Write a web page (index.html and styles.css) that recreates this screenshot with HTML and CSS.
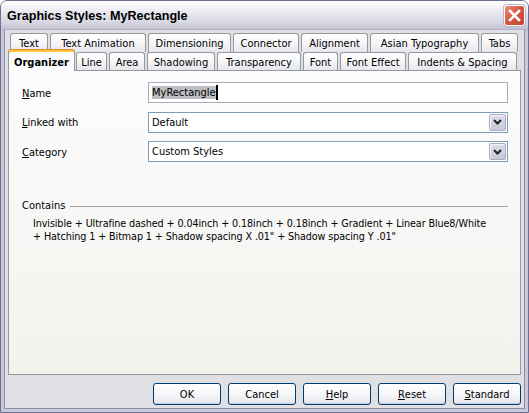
FILE: index.html
```html
<!DOCTYPE html>
<html>
<head>
<meta charset="utf-8">
<link rel="stylesheet" href="styles.css">
</head>
<body>
<div class="window">
  <div class="titlebar">
    <span class="title">Graphics Styles: MyRectangle</span>
    <div class="close">
      <svg width="13" height="13" viewBox="0 0 13 13"><path d="M2 2 L11 11 M11 2 L2 11" stroke="#fff" stroke-width="2.6" stroke-linecap="square"/></svg>
    </div>
  </div>
  <div class="frame">
    <div class="tabs">
      <div class="tabrow back">
        <div class="tab">Text</div>
        <div class="tab">Text Animation</div>
        <div class="tab">Dimensioning</div>
        <div class="tab">Connector</div>
        <div class="tab">Alignment</div>
        <div class="tab">Asian Typography</div>
        <div class="tab last">Tabs</div>
      </div>
      <div class="tabrow front">
        <div class="tab sel">Organizer</div>
        <div class="tab">Line</div>
        <div class="tab">Area</div>
        <div class="tab">Shadowing</div>
        <div class="tab">Transparency</div>
        <div class="tab">Font</div>
        <div class="tab">Font Effect</div>
        <div class="tab">Indents &amp; Spacing</div>
      </div>
    </div>
    <div class="panel">
      <div class="form">
        <label class="lbl"><u>N</u>ame</label>
        <div class="input"><span class="selected">MyRectangle</span><span class="caret"></span></div>
        <label class="lbl"><u>L</u>inked with</label>
        <div class="select"><span>Default</span><span class="dd"><svg width="9" height="6" viewBox="0 0 9 6"><path d="M1 1 L4.5 4.5 L8 1" fill="none" stroke="#222" stroke-width="2"/></svg></span></div>
        <label class="lbl"><u>C</u>ategory</label>
        <div class="select"><span>Custom Styles</span><span class="dd"><svg width="9" height="6" viewBox="0 0 9 6"><path d="M1 1 L4.5 4.5 L8 1" fill="none" stroke="#222" stroke-width="2"/></svg></span></div>
      </div>
      <div class="group">
        <div class="group-head"><span>Contains</span><span class="rule"></span></div>
        <div class="group-body">Invisible + Ultrafine dashed + 0.04inch + 0.18inch + 0.18inch + Gradient + Linear Blue8/White<br>+ Hatching 1 + Bitmap 1 + Shadow spacing X .01" + Shadow spacing Y .01"</div>
      </div>
    </div>
    <div class="buttons">
      <div class="btn">OK</div>
      <div class="btn">Cancel</div>
      <div class="btn"><u>H</u>elp</div>
      <div class="btn"><u>R</u>eset</div>
      <div class="btn"><u>S</u>tandard</div>
    </div>
  </div>
</div>
</body>
</html>
```

FILE: styles.css
```css
* { box-sizing: border-box; }
html, body { margin: 0; padding: 0; background: #ffffff; }
body {
  font-family: "DejaVu Sans Condensed", "Liberation Sans", sans-serif;
  font-size: 11px;
  color: #000;
}
.window {
  width: 529px;
  height: 413px;
  border: 1px solid #6f6e92;
  border-radius: 7px 7px 0 0;
  background: #e0dfe3;
  display: flex;
  flex-direction: column;
  overflow: hidden;
}
.titlebar {
  height: 29px;
  flex: none;
  display: flex;
  align-items: center;
  justify-content: space-between;
  padding: 0 3px 0 6px;
  background: linear-gradient(#ffffff 0%, #ecebf2 35%, #d8d7e3 75%, #c3c2d3 100%);
  border-bottom: 1px solid #b2b1c6;
}
.title {
  font-family: "Liberation Sans", "DejaVu Sans", sans-serif;
  font-weight: bold;
  font-size: 12.6px;
  color: #000;
  padding-top: 2px;
}
.close {
  width: 21px;
  height: 21px;
  border: 1px solid #ffffff;
  border-radius: 3px;
  background: linear-gradient(135deg, #ec8e76 0%, #d65a43 45%, #c23e2a 100%);
  box-shadow: 0 0 0 1px #b7b6c8;
  display: flex;
  align-items: center;
  justify-content: center;
}
.frame {
  flex: 1;
  border: 3px solid #c9c8d7;
  border-top: 0;
  box-shadow: inset 1px 0 #8d8ca8, inset -1px 0 #8d8ca8, inset 0 -1px #8d8ca8;
  padding: 3px 4px 0 4px;
  display: flex;
  flex-direction: column;
}
.tabrow {
  display: grid;
  position: relative;
}
.tabrow.back {
  height: 19px;
  margin-left: 2px;
  grid-template-columns: 40px 98px 85px 68px 69px 111px 37px;
}
.tabrow.front {
  height: 18px;
  grid-template-columns: 68px 33px 38px 70px 86px 37px 68px 111px;
  z-index: 1;
}
.tab {
  margin-right: 2px;
  border: 1px solid #919b9c;
  border-bottom: 0;
  border-radius: 3px 3px 0 0;
  background: linear-gradient(#fefefe 0%, #f6f6f8 50%, #e6e6ec 100%);
  display: flex;
  align-items: center;
  justify-content: center;
  white-space: nowrap;
  padding-top: 1px;
}
.tab.last { margin-right: 0; }
.tab.sel {
  margin-right: 1px;
  margin-top: -3px;
  margin-bottom: -1px;
  font-weight: bold;
  background: #fcfcfe;
  border-top: 1px solid #e68b2c;
  box-shadow: inset 0 2px #ffc83c;
  padding-top: 3px;
  position: relative;
  z-index: 2;
}
.panel {
  height: 305px;
  flex: none;
  border: 1px solid #919b9c;
  background: linear-gradient(#fcfcfe 0%, #f8f8f7 40%, #f3f2ed 100%);
  padding: 11px 12px 0 13px;
}
.form {
  display: grid;
  grid-template-columns: 126px 1fr;
  row-gap: 8.5px;
  align-items: center;
}
.lbl { padding-top: 1px; }
.input, .select {
  height: 21px;
  background: #fff;
  display: flex;
  align-items: center;
  padding-left: 3px;
}
.input { border: 1px solid #a5acb5; }
.selected {
  background: #bdbdc2;
  color: #000;
}
.caret {
  width: 2px;
  height: 15px;
  background: #000;
}
.select {
  border: 1px solid #7f9db9;
  justify-content: space-between;
  padding-right: 1px;
}
.dd {
  width: 17px;
  height: 17px;
  border: 1px solid #a9abc1;
  border-radius: 2px;
  background: linear-gradient(#dcdde8 0%, #c7c9da 100%);
  box-shadow: inset 1px 1px #f2f2f7;
  display: flex;
  align-items: center;
  justify-content: center;
}
.group { margin-top: 37px; }
.group-head {
  display: flex;
  align-items: center;
  gap: 5px;
}
.rule {
  flex: 1;
  height: 1px;
  background: #a0a0a4;
  margin-top: 1px;
}
.group-body {
  padding: 5px 0 0 11px;
  line-height: 13px;
  white-space: nowrap;
  font-size: 10.7px;
  letter-spacing: -0.1px;
}
.buttons {
  margin-top: 8px;
  display: flex;
  justify-content: flex-end;
  gap: 7px;
}
.btn {
  width: 68px;
  height: 22px;
  border: 1px solid #003c74;
  border-radius: 3px;
  background: linear-gradient(#ffffff 0%, #f6f6f9 55%, #e2e2ea 100%);
  box-shadow: inset 0 -1px #cfcfdc;
  display: flex;
  align-items: center;
  justify-content: center;
}
```
